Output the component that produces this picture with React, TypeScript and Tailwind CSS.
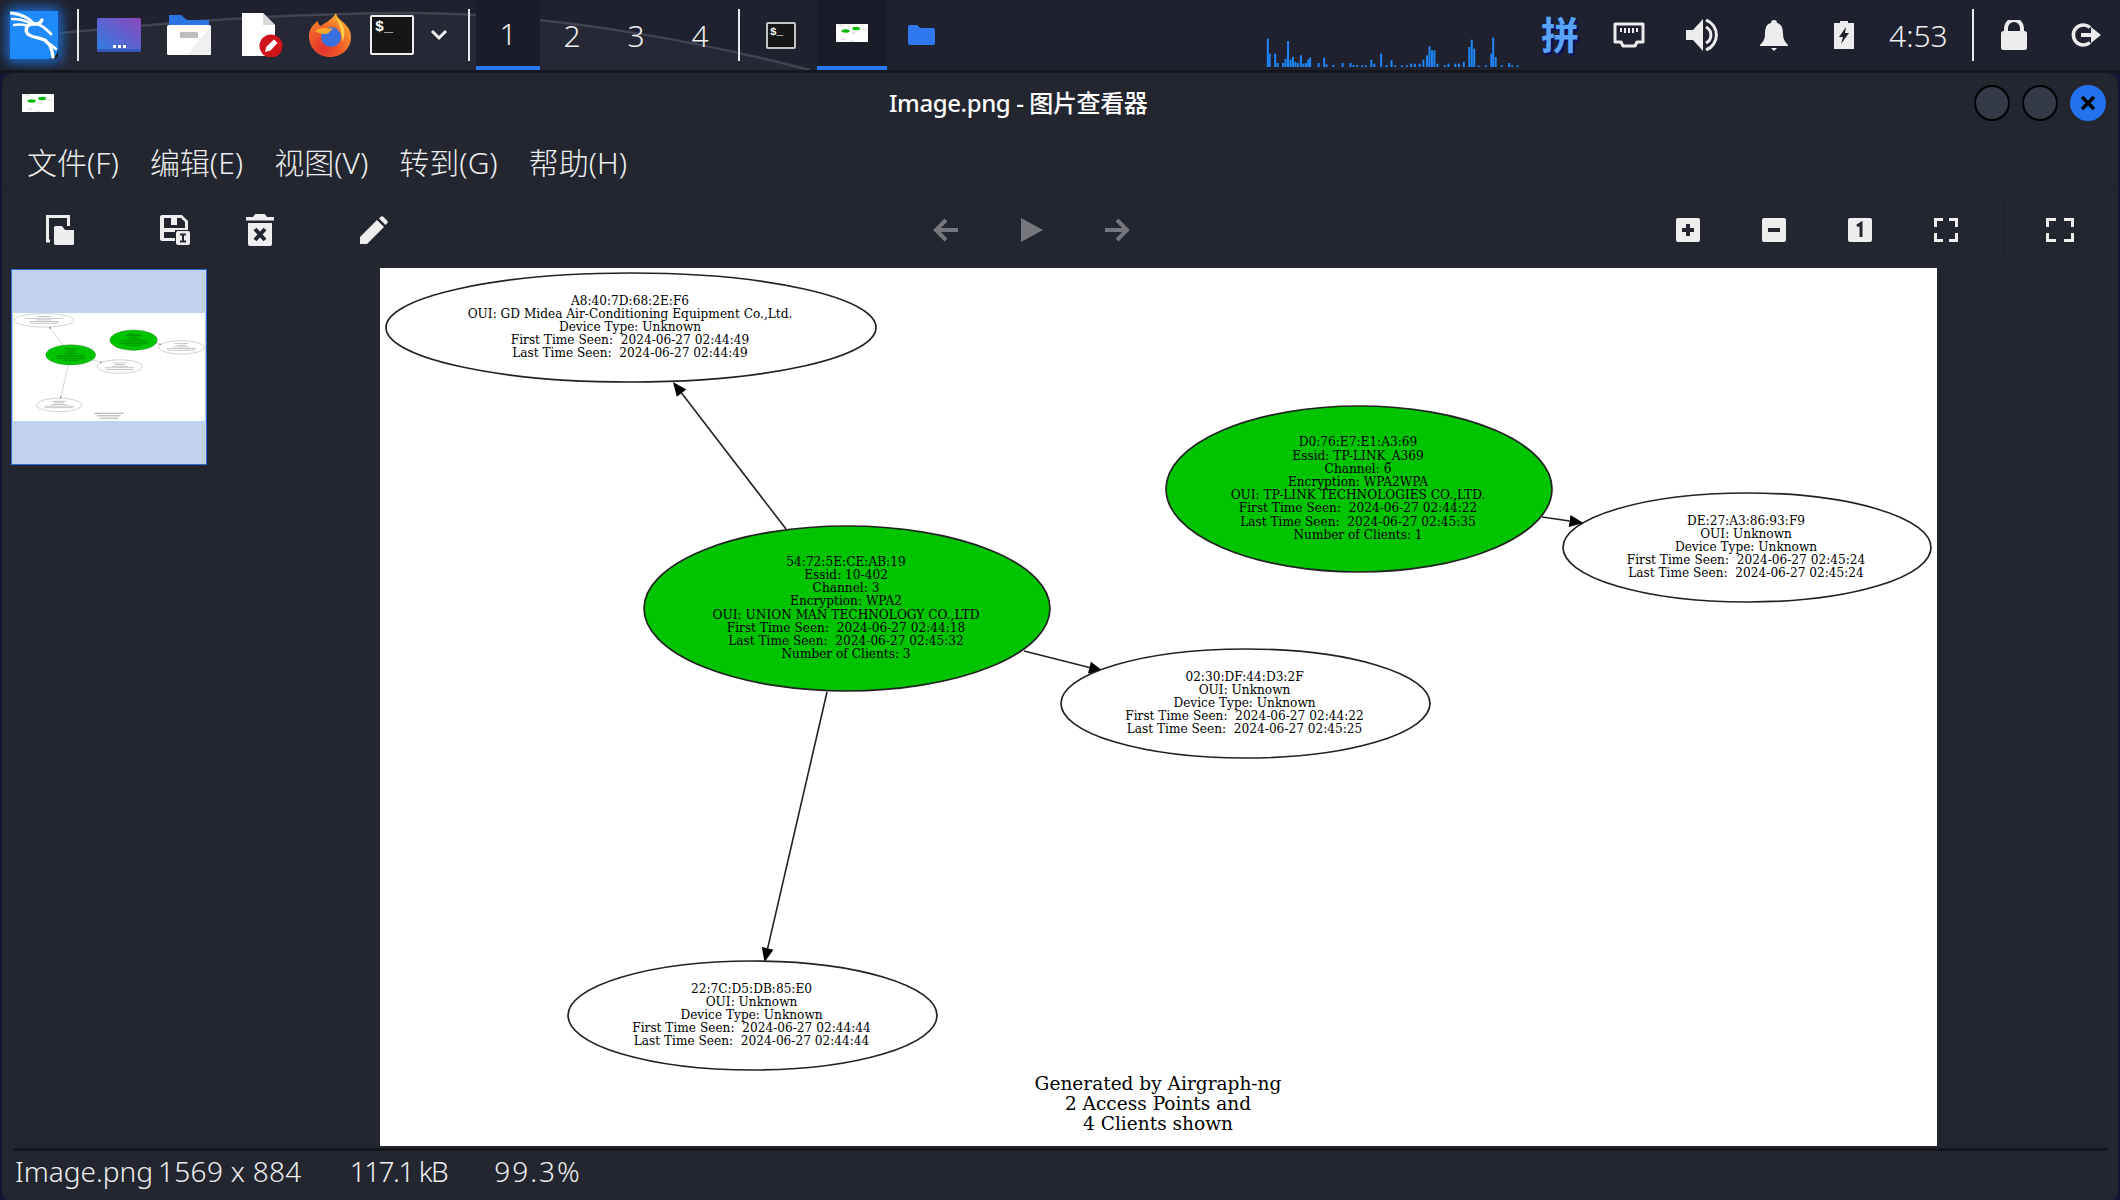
import React from 'react'

const nodes = [
  { cx: 631, cy: 327.5, rx: 245, ry: 54.5, green: false, lines: ['A8:40:7D:68:2E:F6', 'OUI: GD Midea Air-Conditioning Equipment Co.,Ltd.', 'Device Type: Unknown', 'First Time Seen:  2024-06-27 02:44:49', 'Last Time Seen:  2024-06-27 02:44:49'] },
  { cx: 847, cy: 608.5, rx: 203, ry: 82.5, green: true, lines: ['54:72:5E:CE:AB:19', 'Essid: 10-402', 'Channel: 3', 'Encryption: WPA2', 'OUI: UNION MAN TECHNOLOGY CO.,LTD', 'First Time Seen:  2024-06-27 02:44:18', 'Last Time Seen:  2024-06-27 02:45:32', 'Number of Clients: 3'] },
  { cx: 1359, cy: 489, rx: 193, ry: 83, green: true, lines: ['D0:76:E7:E1:A3:69', 'Essid: TP-LINK_A369', 'Channel: 6', 'Encryption: WPA2WPA', 'OUI: TP-LINK TECHNOLOGIES CO.,LTD.', 'First Time Seen:  2024-06-27 02:44:22', 'Last Time Seen:  2024-06-27 02:45:35', 'Number of Clients: 1'] },
  { cx: 1747, cy: 547.5, rx: 184, ry: 54.5, green: false, lines: ['DE:27:A3:86:93:F9', 'OUI: Unknown', 'Device Type: Unknown', 'First Time Seen:  2024-06-27 02:45:24', 'Last Time Seen:  2024-06-27 02:45:24'] },
  { cx: 1245.5, cy: 703.5, rx: 184.5, ry: 54.5, green: false, lines: ['02:30:DF:44:D3:2F', 'OUI: Unknown', 'Device Type: Unknown', 'First Time Seen:  2024-06-27 02:44:22', 'Last Time Seen:  2024-06-27 02:45:25'] },
  { cx: 752.5, cy: 1015.5, rx: 184.5, ry: 54.5, green: false, lines: ['22:7C:D5:DB:85:E0', 'OUI: Unknown', 'Device Type: Unknown', 'First Time Seen:  2024-06-27 02:44:44', 'Last Time Seen:  2024-06-27 02:44:44'] },
]

const edges = [
  [786, 529, 673, 382],
  [1024, 651, 1103, 671],
  [1542, 517, 1583.5, 523],
  [827, 692, 764.5, 962],
]

const footer = ['Generated by Airgraph-ng', '2 Access Points and', '4 Clients shown']

const traffic = [
  [176, 85], [179, 40], [188, 40], [192, 12], [201, 12], [205, 25], [209, 78], [213, 22], [217, 30], [221, 15], [225, 12], [230, 35], [234, 10], [238, 12], [242, 22], [245, 28],
  [259, 12], [268, 28], [272, 8], [283, 6], [298, 12], [311, 12], [316, 6], [322, 6], [330, 5], [336, 5], [345, 22], [350, 10], [361, 40], [370, 6], [378, 20], [384, 5], [395, 5], [403, 5],
  [410, 10], [416, 10], [424, 10], [430, 22], [436, 35], [440, 62], [444, 50], [448, 50], [453, 10], [465, 5], [471, 10], [482, 10], [488, 10], [496, 15], [505, 60], [509, 82], [513, 55],
  [520, 5], [532, 5], [541, 40], [544, 88], [548, 30], [558, 5], [570, 12], [575, 5], [584, 5],
]

// the picture on show, also used small for the thumbnail and task icons
function Graph({ small = false, className = '' }: { small?: boolean; className?: string }) {
  return (
    <svg viewBox="380 268 1557 878" className={className}>
      <rect x="380" y="268" width="1557" height="878" fill="#ffffff" />
      {edges.map(([x1, y1, x2, y2], i) => {
        const len = Math.hypot(x2 - x1, y2 - y1)
        const ux = (x2 - x1) / len
        const uy = (y2 - y1) / len
        const bx = x2 - ux * 14
        const by = y2 - uy * 14
        return (
          <g key={i}>
            <line x1={x1} y1={y1} x2={bx} y2={by} stroke="#222" strokeWidth="1.6" />
            <polygon points={`${x2},${y2} ${bx - uy * 6},${by + ux * 6} ${bx + uy * 6},${by - ux * 6}`} fill="#000" />
          </g>
        )
      })}
      {nodes.map((n, i) => (
        <g key={i}>
          <ellipse cx={n.cx} cy={n.cy} rx={n.rx} ry={n.ry} fill={n.green ? '#00c400' : '#ffffff'} stroke="#222" strokeWidth="1.7" />
          {small
            ? n.lines.map((l, j) => (
                <rect key={j} x={n.cx - l.length * 3.2} y={n.cy - n.lines.length * 6.6 + j * 13.2} width={l.length * 6.4} height="6" fill="#000" opacity=".3" />
              ))
            : n.lines.map((l, j) => (
                <text
                  key={j}
                  transform={`translate(${n.cx - 1} ${n.cy - (n.lines.length - 1) * 6.6 + j * 13.2 + 3.5}) scale(.935 1)`}
                  textAnchor="middle"
                  fontSize="13"
                  fill="#000"
                  xmlSpace="preserve"
                  className="font-['DejaVu_Serif',serif]"
                >
                  {l}
                </text>
              ))}
        </g>
      ))}
      {small
        ? footer.map((l, j) => <rect key={j} x={1158 - l.length * 5} y={1079 + j * 20} width={l.length * 10} height="9" fill="#000" opacity=".3" />)
        : footer.map((l, j) => (
            <text
              key={j}
              transform={`translate(1158 ${1090 + j * 20}) scale(1.03 1)`}
              textAnchor="middle"
              fontSize="18"
              fill="#000"
              className="font-['DejaVu_Serif',serif]"
            >
              {l}
            </text>
          ))}
    </svg>
  )
}

function KaliIcon() {
  return (
    <div className="rounded-[4px] shadow-[0_0_12px_4px_rgba(30,130,255,.75)] w-[48px] h-[48px] ml-[10px] shrink-0">
      <svg width="48" height="48" viewBox="0 0 48 48">
        <path d="M0 0H48V36Q48 48 36 48H0Z" fill="#1f8bfb" />
        <g fill="none" stroke="#fff" strokeLinecap="round">
          <path d="M1 2C10 3 18 6 23 12" strokeWidth="2.8" />
          <path d="M2 8C10 8 17 10 21 13" strokeWidth="2.4" />
          <path d="M4 14C10 13 15 14 18 15" strokeWidth="2.4" />
          <path d="M32 9C30 13 27 13 23 13C17 13 15 18 17 22C20 27 30 26 36 30C40 33 42 37 43 46" strokeWidth="3.4" />
          <path d="M23 13C30 12 35 17 41 23" strokeWidth="2.8" />
          <path d="M37 32C40 33 43 35 46 38" strokeWidth="2.6" />
        </g>
      </svg>
    </div>
  )
}

function LauncherIcon() {
  return (
    <svg width="44" height="34" viewBox="0 0 44 34" className="ml-[18px] shrink-0">
      <defs>
        <linearGradient id="launch" x1="0" y1="1" x2="1" y2="0">
          <stop offset="0" stopColor="#2f7ee6" />
          <stop offset="1" stopColor="#8a47b8" />
        </linearGradient>
      </defs>
      <rect width="44" height="33" rx="2" fill="url(#launch)" />
      <rect y="31" width="44" height="3" rx="1" fill="#3559b8" />
      <rect x="16" y="27" width="3" height="3" fill="#fff" />
      <rect x="21" y="27" width="3" height="3" fill="#fff" />
      <rect x="26" y="27" width="3" height="3" fill="#fff" />
    </svg>
  )
}

function FilesIcon() {
  return (
    <svg width="44" height="40" viewBox="0 0 44 40" className="ml-[26px] shrink-0">
      <path d="M2 0H14L20 5H42V12H2Z" fill="#2c74e2" />
      <rect y="10" width="44" height="30" rx="1.5" fill="#ffffff" />
      <path d="M44 11V38.5Q44 40 42 40H20Z" fill="#f0f0f0" />
      <rect x="13" y="17" width="18" height="6" rx="1" fill="#bdbdbd" />
    </svg>
  )
}

function DocIcon() {
  return (
    <svg width="42" height="44" viewBox="0 0 42 44" className="ml-[30px] shrink-0">
      <path d="M1 0H22L34 12V43H1Z" fill="#ffffff" />
      <path d="M22 0L34 12H22Z" fill="#d8d8d8" />
      <circle cx="30" cy="33" r="11.5" fill="#d0141c" />
      <path d="M24 39L25.5 33.5L33 26.5L36.5 30L29.5 37.5Z" fill="#fff" />
    </svg>
  )
}

function FirefoxIcon() {
  return (
    <svg width="42" height="44" viewBox="0 0 42 44" className="ml-[26px] shrink-0">
      <defs>
        <radialGradient id="fx" cx=".35" cy=".8" r=".9">
          <stop offset="0" stopColor="#e3322e" />
          <stop offset=".5" stopColor="#f2612a" />
          <stop offset="1" stopColor="#fdbd30" />
        </radialGradient>
      </defs>
      <path d="M27 0C28 5 31 6 36 11C41 16 42 20 42 24C42 35 33 44 21 44C9 44 0 35 0 23C0 17 3 12 9 8C9 11 10 12 12 13C15 10 22 8 27 0Z" fill="url(#fx)" />
      <circle cx="22" cy="24" r="10" fill="#3a6fe0" />
      <path d="M6 18C12 14 19 15 24 16C20 18 21 21 16 21C12 21 9 20 6 18Z" fill="#fba92b" />
      <path d="M27 4C35 11 38 20 33 29C33 22 32 14 27 4Z" fill="#ffd24a" />
    </svg>
  )
}

function TermIcon({ big = false }: { big?: boolean }) {
  return (
    <div
      className={
        big
          ? "w-[44px] h-[40px] bg-[#161616] border-2 border-[#eeeeee] rounded-[2px] pl-[3px] text-[15px] leading-[22px] font-bold text-white font-['Liberation_Mono',monospace] shrink-0"
          : "w-[30px] h-[27px] bg-[#161616] border-2 border-[#c4c4c4] rounded-[2px] pl-[2px] text-[11px] leading-[16px] font-bold text-white font-['Liberation_Mono',monospace] shrink-0"
      }
    >
      $_
    </div>
  )
}

function PanelSep({ ml }: { ml: string }) {
  return <div className={`w-[2px] h-[52px] bg-[#e8e8e8] shrink-0 ${ml}`} />
}

function TopPanel() {
  return (
    <div className="relative h-[73px] bg-[#1f212e] border-b-[3px] border-[#15161c] flex items-center shrink-0 overflow-hidden">
      <svg className="absolute left-0 top-0 pointer-events-none" width="900" height="70" viewBox="0 0 900 70">
        <path d="M60 33C170 22 300 12 420 13C560 14 710 44 810 70H60Z" fill="#ffffff" opacity=".035" />
        <path d="M60 33C170 22 300 12 420 13C560 14 710 44 810 70" fill="none" stroke="#ffffff" strokeWidth="2.5" opacity=".14" />
      </svg>
      <div className="relative flex items-center h-full w-full">
        <KaliIcon />
        <PanelSep ml="ml-[19px]" />
        <LauncherIcon />
        <FilesIcon />
        <DocIcon />
        <FirefoxIcon />
        <div className="ml-[19px]">
          <TermIcon big />
        </div>
        <svg width="18" height="12" viewBox="0 0 18 12" className="ml-[16px] shrink-0">
          <path d="M2 2L9 9L16 2" fill="none" stroke="#eeeeee" strokeWidth="3" />
        </svg>
        <PanelSep ml="ml-[20px]" />
        <div className="flex h-full ml-[6px]">
          {['1', '2', '3', '4'].map((w, i) => (
            <div
              key={w}
              className={
                i === 0
                  ? 'w-[64px] h-full bg-[#1a1c29] border-b-4 border-[#2a78f0] flex items-center justify-center text-[30px] font-light text-[#eeeeee]'
                  : 'w-[64px] h-full flex items-center justify-center text-[30px] font-light text-[#eeeeee]'
              }
            >
              {w}
            </div>
          ))}
        </div>
        <PanelSep ml="ml-[6px]" />
        <div className="ml-[26px]">
          <TermIcon />
        </div>
        <div className="ml-[21px] w-[70px] h-full bg-[#1a1c29] border-b-4 border-[#2a78f0] flex items-center justify-center shrink-0">
          <Graph small className="w-[32px] h-[18px]" />
        </div>
        <svg width="28" height="20" viewBox="0 0 28 20" className="ml-[20px] shrink-0">
          <path d="M1 2Q1 0 3 0H10L13 3H26Q28 3 28 5V18Q28 20 26 20H3Q1 20 1 18Z" fill="#2f78ee" />
        </svg>
        <svg width="254" height="30" viewBox="0 0 254 30" className="ml-[330px] self-end mb-[3px] shrink-0">
          {traffic.map(([zx, zh]) => (
            <rect key={zx} x={(zx - 173) / 1.633} y={30 - zh / 3} width="2" height={zh / 3} fill="#1f86f7" />
          ))}
        </svg>
        <div className="ml-[20px] w-[42px] text-center text-[38px] leading-[42px] font-bold text-[#58a4f6] font-['Noto_Sans_CJK_SC',sans-serif] [text-shadow:2px_2px_0_#0a0f6a] shrink-0 -mt-[4px]">
          拼
        </div>
        <svg width="32" height="26" viewBox="0 0 32 26" className="ml-[32px] shrink-0">
          <path d="M2 2H30V20H24L22 24H10L8 20H2Z" fill="none" stroke="#ececec" strokeWidth="3" strokeLinejoin="round" />
          <path d="M8 6V10M12 6V11M16 6V11M20 6V11M24 6V10" stroke="#ececec" strokeWidth="2" />
        </svg>
        <svg width="34" height="32" viewBox="0 0 34 32" className="ml-[41px] shrink-0">
          <path d="M0 11H7L17 0V32L7 21H0Z" fill="#ececec" />
          <path d="M20 8A9 9 0 0 1 20 24" fill="none" stroke="#ececec" strokeWidth="3" />
          <path d="M20 1A16 16 0 0 1 20 31" fill="none" stroke="#ececec" strokeWidth="3" />
        </svg>
        <svg width="28" height="31" viewBox="0 0 28 31" className="ml-[40px] shrink-0">
          <path d="M14 0C16 0 17 1 17 3C22 4 23 9 23 14C23 19 25 22 28 25V26H0V25C3 22 5 19 5 14C5 9 6 4 11 3C11 1 12 0 14 0Z" fill="#ececec" />
          <path d="M11 28H17L14 31Z" fill="#ececec" />
        </svg>
        <svg width="20" height="28" viewBox="0 0 20 28" className="ml-[46px] shrink-0">
          <path d="M6 0H14V2H20V28H0V2H6Z" fill="#ececec" />
          <path d="M12 6L5 16H9L7 23L15 12H11Z" fill="#1f212e" />
        </svg>
        <div className="ml-[35px] w-[58px] text-[30px] font-light text-[#eeeeee] whitespace-nowrap shrink-0">4:53</div>
        <PanelSep ml="ml-[25px]" />
        <svg width="26" height="30" viewBox="0 0 26 30" className="ml-[27px] shrink-0">
          <path d="M5 12V8A8 8 0 0 1 21 8V12" fill="none" stroke="#ececec" strokeWidth="4" />
          <rect y="11" width="26" height="19" rx="2.5" fill="#ececec" />
        </svg>
        <svg width="30" height="24" viewBox="0 0 30 24" className="ml-[44px] shrink-0">
          <path d="M19 4.5A10 10 0 1 0 19 19.5" fill="none" stroke="#ececec" strokeWidth="3.5" />
          <path d="M10 10H20V4L30 12L20 20V14H10Z" fill="#ececec" />
        </svg>
      </div>
    </div>
  )
}

function WinButton({ close = false }: { close?: boolean }) {
  if (close) {
    return (
      <div className="w-[36px] h-[36px] rounded-full bg-[#2272ee] flex items-center justify-center">
        <svg width="16" height="16" viewBox="0 0 16 16">
          <path d="M2 2L14 14M14 2L2 14" stroke="#000" strokeWidth="3.5" />
        </svg>
      </div>
    )
  }
  return <div className="w-[36px] h-[36px] rounded-full bg-[#353a47] border-2 border-black" />
}

function TitleBar() {
  return (
    <div className="relative h-[60px] flex items-center justify-between pl-[20px] pr-[12px] shrink-0">
      <Graph small className="w-[32px] h-[18px]" />
      <div className="absolute left-[887px] top-[14px] text-[24px] leading-[32px] font-medium text-white whitespace-nowrap tracking-[-0.4px]">Image.png - 图片查看器</div>
      <div className="flex gap-[12px]">
        <WinButton />
        <WinButton />
        <WinButton close />
      </div>
    </div>
  )
}

function MenuBar() {
  return (
    <div className="h-[57px] flex items-center pl-[25px] pt-[3px] gap-[31px] border-b border-[#1e2027] text-[30px] font-light text-[#eeeeee] shrink-0">
      {['文件(F)', '编辑(E)', '视图(V)', '转到(G)', '帮助(H)'].map((m) => (
        <span key={m} className="whitespace-nowrap">
          {m}
        </span>
      ))}
    </div>
  )
}

function Tool({ ml, children }: { ml: string; children: React.ReactNode }) {
  return <div className={`w-[40px] h-[40px] flex items-center justify-center shrink-0 ${ml}`}>{children}</div>
}

function ToolSep({ ml }: { ml: string }) {
  return <div className={`w-px h-[58px] bg-[#1e2027] shrink-0 ${ml}`} />
}

function Toolbar() {
  return (
    <div className="h-[78px] flex items-center pl-[38px] pt-[2px] shrink-0">
      <Tool ml="">
        <svg width="28" height="30" viewBox="0 0 28 30">
          <path d="M4 26H1.5V1.5H22.5V11" fill="none" stroke="#eeeeee" strokeWidth="3" />
          <path d="M8 12.5Q8 11 9.5 11H16L19 15H28V28.5Q28 30 26.5 30H9.5Q8 30 8 28.5Z" fill="#eeeeee" />
        </svg>
      </Tool>
      <ToolSep ml="ml-[37px]" />
      <Tool ml="ml-[37px]">
        <svg width="30" height="30" viewBox="0 0 30 30">
          <path fillRule="evenodd" d="M2 0H22L28 6V15H15V26H2Q0 26 0 24V2Q0 0 2 0ZM4 3V13H25V7L21 3H17V10H11V3ZM4 17V23H15V17Z" fill="#eeeeee" />
          <rect x="16" y="16" width="14" height="14" rx="2" fill="#eeeeee" />
          <path d="M20 19.5H26M23 19.5V26.5M20 26.5H26" stroke="#23262f" strokeWidth="2" />
        </svg>
      </Tool>
      <Tool ml="ml-[45px]">
        <svg width="28" height="32" viewBox="0 0 28 32">
          <path d="M9 0H19L21 3H28V6.5H0V3H7Z" fill="#eeeeee" />
          <path fillRule="evenodd" d="M2 9H26V30Q26 32 24 32H4Q2 32 2 30Z" fill="#eeeeee" />
          <path d="M9 15L19 26M19 15L9 26" stroke="#23262f" strokeWidth="4" />
        </svg>
      </Tool>
      <ToolSep ml="ml-[37px]" />
      <Tool ml="ml-[36px]">
        <svg width="28" height="28" viewBox="0 0 28 28">
          <path d="M0 28V21L17 4L24 11L7 28Z" fill="#eeeeee" />
          <path d="M19 2.5L21 0.5Q22 0 23 0.5L27.5 5Q28 6 27.5 7L25.5 9Z" fill="#eeeeee" />
        </svg>
      </Tool>
      <Tool ml="ml-[532px]">
        <svg width="26" height="24" viewBox="0 0 26 24">
          <path d="M13 2L3 12L13 22M3 12H25" fill="none" stroke="#75777c" strokeWidth="4" />
        </svg>
      </Tool>
      <Tool ml="ml-[46px]">
        <svg width="24" height="26" viewBox="0 0 24 26">
          <path d="M1 1L23 13L1 25Z" fill="#75777c" />
        </svg>
      </Tool>
      <Tool ml="ml-[45px]">
        <svg width="26" height="24" viewBox="0 0 26 24">
          <path d="M13 2L23 12L13 22M23 12H1" fill="none" stroke="#75777c" strokeWidth="4" />
        </svg>
      </Tool>
      <Tool ml="ml-[531px]">
        <svg width="24" height="24" viewBox="0 0 24 24">
          <rect width="24" height="24" rx="2" fill="#eeeeee" />
          <path d="M12 6V18M6 12H18" stroke="#23262f" strokeWidth="4" />
        </svg>
      </Tool>
      <Tool ml="ml-[46px]">
        <svg width="24" height="24" viewBox="0 0 24 24">
          <rect width="24" height="24" rx="2" fill="#eeeeee" />
          <path d="M6 12H18" stroke="#23262f" strokeWidth="4" />
        </svg>
      </Tool>
      <Tool ml="ml-[46px]">
        <svg width="24" height="24" viewBox="0 0 24 24">
          <rect width="24" height="24" rx="2" fill="#eeeeee" />
          <path d="M9 8L13 5.5V19" fill="none" stroke="#23262f" strokeWidth="3" />
        </svg>
      </Tool>
      <Tool ml="ml-[46px]">
        <svg width="24" height="24" viewBox="0 0 24 24">
          <path d="M9 1.5H1.5V9M15 1.5H22.5V9M9 22.5H1.5V15M15 22.5H22.5V15" fill="none" stroke="#eeeeee" strokeWidth="3" />
        </svg>
      </Tool>
      <ToolSep ml="ml-[37px]" />
      <Tool ml="ml-[36px]">
        <svg width="28" height="24" viewBox="0 0 28 24">
          <path d="M10 1.5H1.5V9M18 1.5H26.5V9M10 22.5H1.5V15M18 22.5H26.5V15" fill="none" stroke="#eeeeee" strokeWidth="3" />
        </svg>
      </Tool>
    </div>
  )
}

function Body() {
  return (
    <div className="h-[878px] flex shrink-0">
      <div className="w-[378px] pl-[9px] pt-[1px] shrink-0">
        <div className="w-[196px] h-[196px] bg-[#c0d2ee] border border-[#2a6bd4] flex items-center justify-center">
          <Graph small className="w-[192px] h-[108px] blur-[0.5px]" />
        </div>
      </div>
      <Graph className="w-[1557px] h-[878px] shrink-0" />
    </div>
  )
}

function StatusBar() {
  return (
    <div className="flex-1 min-h-0 flex flex-col">
      <div className="h-[3px] mt-[2px] ml-[12px] mr-[10px] bg-[#14161c]" />
      <div className="flex-1 min-h-0 flex items-center pl-[13px] pb-[10px] text-[28px] leading-[30px] font-light text-[#eeeeee] whitespace-nowrap">
        <span>Image.png</span>
        <span className="ml-[5px] tracking-[0.3px]">1569 x 884</span>
        <span className="ml-[48px] tracking-[-1.5px]">117.1 kB</span>
        <span className="ml-[47px] tracking-[2px]">99.3%</span>
      </div>
    </div>
  )
}

export default function App() {
  return (
    <div className="w-[2120px] h-[1200px] bg-[#141632] flex flex-col overflow-hidden font-['Noto_Sans','Noto_Sans_CJK_SC',sans-serif]">
      <TopPanel />
      <div className="flex-1 min-h-0 mx-[2px] bg-[#23262f] rounded-t-[12px] rounded-b-[8px] flex flex-col overflow-hidden">
        <TitleBar />
        <MenuBar />
        <Toolbar />
        <Body />
        <StatusBar />
      </div>
    </div>
  )
}
